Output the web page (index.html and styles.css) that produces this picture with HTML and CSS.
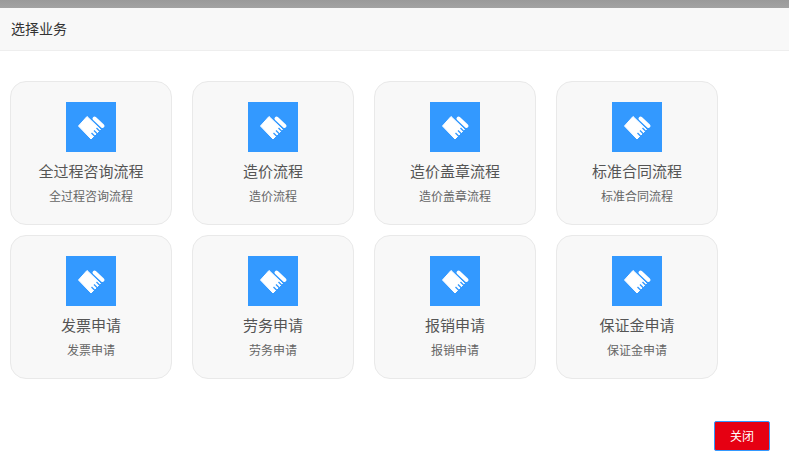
FILE: index.html
```html
<!DOCTYPE html>
<html lang="zh">
<head>
<meta charset="utf-8">
<title>选择业务</title>
<link rel="stylesheet" href="styles.css">
</head>
<body>
<div class="topbar"></div>
<header class="header">选择业务</header>
<main class="grid">
  <div class="card"><div class="icon"><svg viewBox="0 0 50 50"><use href="#shake"/></svg></div><div class="name">全过程咨询流程</div><div class="sub">全过程咨询流程</div></div>
  <div class="card"><div class="icon"><svg viewBox="0 0 50 50"><use href="#shake"/></svg></div><div class="name">造价流程</div><div class="sub">造价流程</div></div>
  <div class="card"><div class="icon"><svg viewBox="0 0 50 50"><use href="#shake"/></svg></div><div class="name">造价盖章流程</div><div class="sub">造价盖章流程</div></div>
  <div class="card"><div class="icon"><svg viewBox="0 0 50 50"><use href="#shake"/></svg></div><div class="name">标准合同流程</div><div class="sub">标准合同流程</div></div>
  <div class="card"><div class="icon"><svg viewBox="0 0 50 50"><use href="#shake"/></svg></div><div class="name">发票申请</div><div class="sub">发票申请</div></div>
  <div class="card"><div class="icon"><svg viewBox="0 0 50 50"><use href="#shake"/></svg></div><div class="name">劳务申请</div><div class="sub">劳务申请</div></div>
  <div class="card"><div class="icon"><svg viewBox="0 0 50 50"><use href="#shake"/></svg></div><div class="name">报销申请</div><div class="sub">报销申请</div></div>
  <div class="card"><div class="icon"><svg viewBox="0 0 50 50"><use href="#shake"/></svg></div><div class="name">保证金申请</div><div class="sub">保证金申请</div></div>
</main>
<footer class="footer"><button class="close">关闭</button></footer>
<svg class="defs" aria-hidden="true"><defs><g id="shake">
  <path fill="#fff" stroke="#fff" stroke-width="1" stroke-linejoin="round" d="M12.5 24 21 14.5 34.5 27.5 25 37z"/>
  <path fill="none" stroke="#fff" stroke-width="4" stroke-linecap="round" d="M28.5 16.5 36.5 24"/>
  <path fill="none" stroke="#3399ff" stroke-width="1.4" d="M29 34.5 25.5 31M31.5 32 28 28.5M34 29.5 30.5 26"/>
</g></defs></svg>
</body>
</html>
```
FILE: styles.css
```css
* { box-sizing: border-box; }
html, body { margin: 0; padding: 0; }
body {
  width: 789px;
  height: 458px;
  overflow: hidden;
  background: #fff;
  font-family: "Noto Sans CJK SC", "Liberation Sans", sans-serif;
  color: #333;
  display: flex;
  flex-direction: column;
}
.topbar {
  height: 8px;
  flex: none;
  background: linear-gradient(#9a9a9a, #a2a2a2);
}
.header {
  height: 43px;
  flex: none;
  padding-left: 11px;
  line-height: 41px;
  font-size: 14px;
  color: #333;
  background: #f8f8f8;
  border-bottom: 1px solid #eee;
}
.grid {
  display: grid;
  grid-template-columns: repeat(4, 162px);
  grid-auto-rows: 144px;
  column-gap: 20px;
  row-gap: 10px;
  padding: 30px 0 0 10px;
  flex: none;
}
.card {
  background: #f8f8f8;
  border: 1px solid #e9e9e9;
  border-radius: 16px;
  padding-top: 20px;
  display: flex;
  flex-direction: column;
  align-items: center;
}
.icon {
  width: 50px;
  height: 50px;
  background: #3399ff;
}
.icon svg { display: block; width: 50px; height: 50px; }
.name {
  margin-top: 8px;
  font-size: 15px;
  line-height: 22px;
  color: #555;
}
.sub {
  margin-top: 5px;
  font-size: 12px;
  line-height: 18px;
  color: #666;
}
.footer {
  flex: 1;
  display: flex;
  justify-content: flex-end;
  align-items: flex-start;
  padding: 42px 19px 0 0;
}
.close {
  width: 56px;
  height: 30px;
  padding: 0 0 2px;
  border: 1px solid #3399ff;
  border-radius: 2px;
  background: #e60012;
  color: #fff;
  font-family: inherit;
  font-size: 12px;
}
.defs { position: absolute; width: 0; height: 0; }
```
